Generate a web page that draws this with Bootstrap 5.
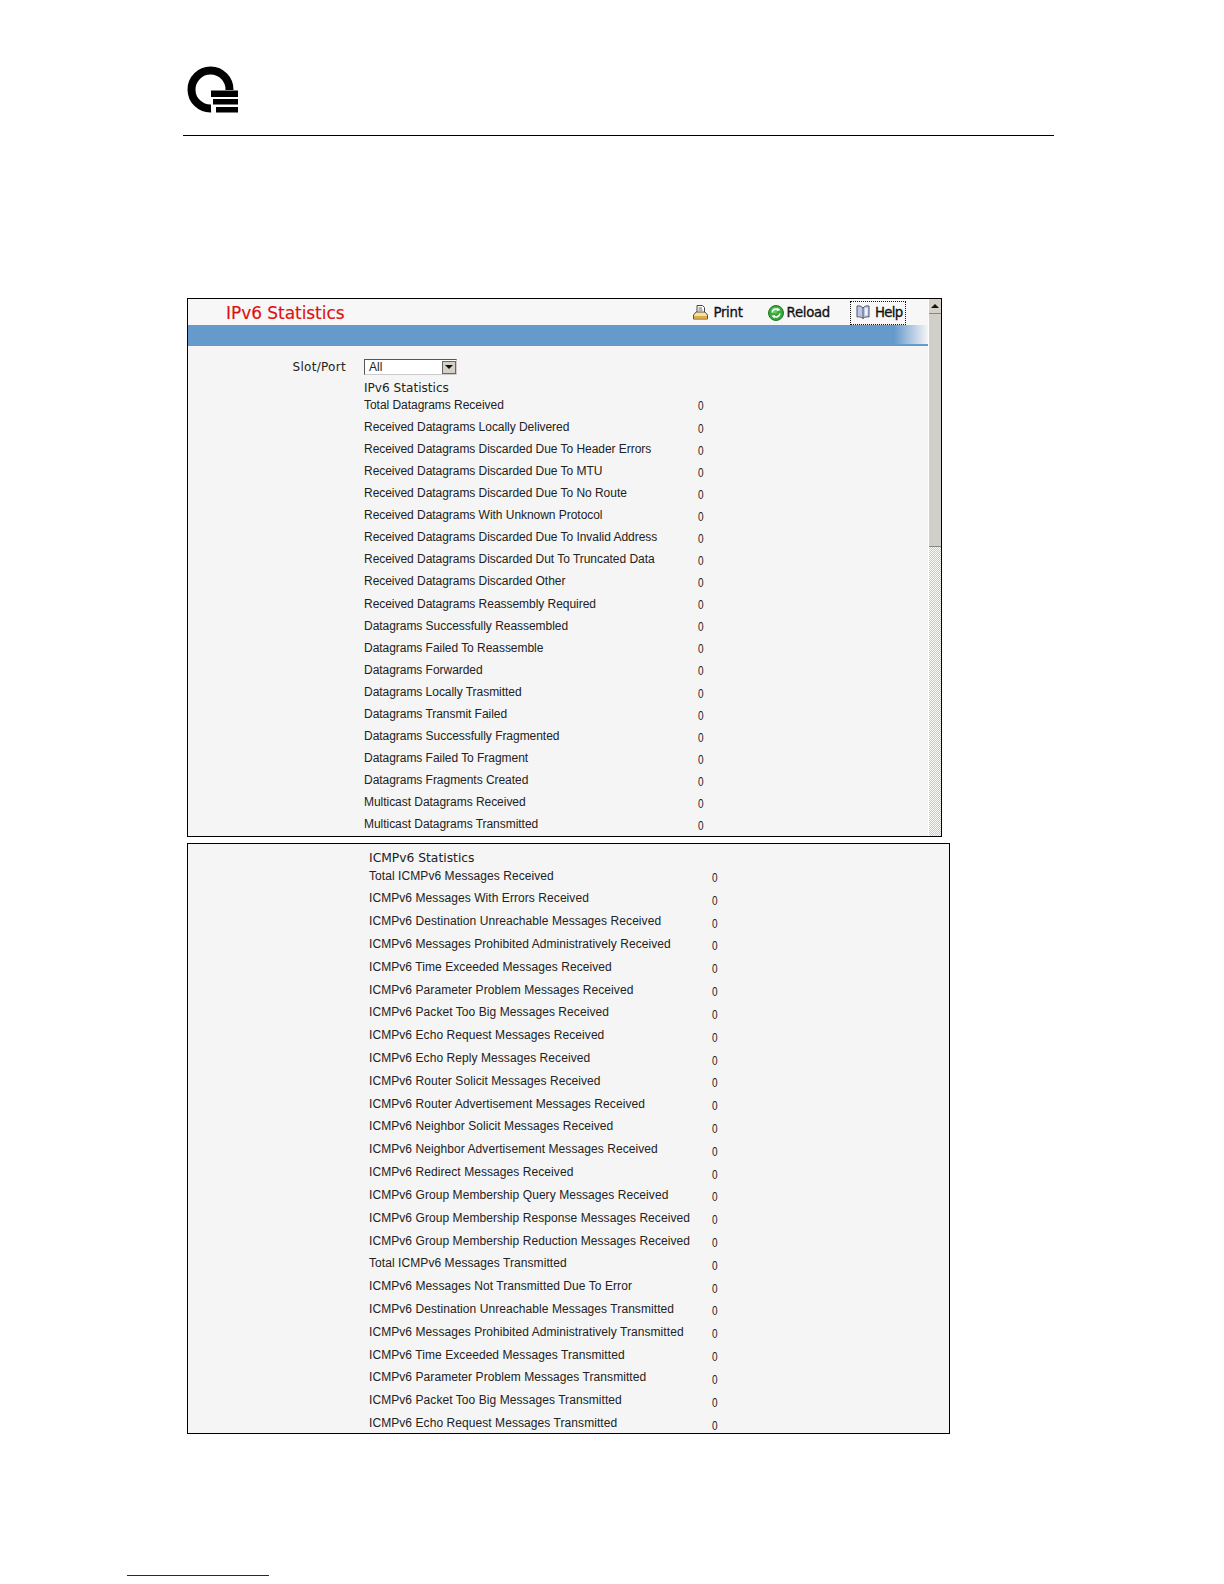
<!DOCTYPE html>
<html lang="en">
<head>
<meta charset="utf-8">
<title>IPv6 Statistics</title>
<link href="https://cdn.jsdelivr.net/npm/bootstrap@5.3.0/dist/css/bootstrap.min.css" rel="stylesheet">
<style>
html,body{background:#fff;margin:0}
body{height:1584px;overflow:hidden;font-family:"Liberation Sans",Arial,sans-serif;color:#222;position:relative}
.logo-wrap{padding:65px 0 0 185px;height:135px}
.logo-wrap svg{display:block}
.top-rule{margin-left:183px;width:871px;height:1px;background:#000}
.panel-a,.panel-b{margin-left:187px;border:1px solid #000;background:#f5f5f5;overflow:hidden}
.panel-a{margin-top:162px;width:755px;height:539px}
.panel-b{margin-top:6px;width:763px;height:591px}
.main-a{width:740px;height:537px}
.title-bar{height:26px;padding:1px 0 0 38px;background:#f7f7f7}
.page-title{font-family:"DejaVu Sans",sans-serif;font-size:17px;color:#e01010;line-height:26px;letter-spacing:-.05px;-webkit-text-stroke:.15px #e01010}
.tool{font-family:"DejaVu Sans",sans-serif;font-size:13.3px;color:#111;line-height:18px;letter-spacing:-.3px;gap:5px;-webkit-text-stroke:.3px #111}
.tools{padding-right:23px;gap:26px}
.tool-reload{gap:3px;margin-left:-1px}
.tool-help{outline:1px dotted #111;height:22px;width:54px;padding-left:4px;margin-left:-5px;gap:4px;letter-spacing:-.7px}
.band{height:21px;background:linear-gradient(90deg,#6699cc 0,#6699cc 95.4%,#f5f5f5 100%);border-bottom:2px solid #6699cc;border-image:linear-gradient(90deg,#6699cc,#6699cc) 1}
.slot-row{height:34px;padding-top:13px}
.slot-label{width:158px;text-align:right;font-family:"DejaVu Sans",sans-serif;font-size:12px;letter-spacing:.3px;line-height:16px;color:#222}
.slot-select{margin-left:18px;width:93px;height:16px;border:1px solid #555;border-right-color:#ccc;border-bottom-color:#ccc;background:#fff;font-size:12px;line-height:14px;padding-left:4px}
.slot-arrow{width:14px;height:13px;margin:0 0 0 auto;background:#d4d0c8;border:1px solid #666;display:flex;align-items:center;justify-content:center}
.slot-arrow::before{content:"";border:4px solid transparent;border-top:4px solid #111;border-bottom:0}
.sec-a,.sec-b{font-family:"DejaVu Sans",sans-serif;line-height:16px;color:#222}
.sec-a{margin-left:176px;font-size:12.1px}
.sec-b{margin:6px 0 0 181px;font-size:12.3px}
.rows-a{padding:.8px 0 0 176px}
.rows-b{padding:1.5px 0 0 181px}
.rows-a .stat{height:22.08px;letter-spacing:-.04px}
.rows-b .stat{height:22.82px;letter-spacing:.07px}
.stat{font-size:12px;line-height:17px;color:#222}
.rows-a .stat-name{width:334px}
.rows-b .stat-name{width:343px}
.rows-a .stat-val{padding-top:1.7px}
.stat-val{font-size:12.5px;padding-top:2.5px;transform:scaleX(.8);transform-origin:left top}
.sbar{width:13px;height:537px;background-color:#f4f4f0;background-image:repeating-conic-gradient(#c9c9c2 0 25%,#fafaf7 0 50%);background-size:2px 2px;border-left:1px solid #fff}
.sbar-up{height:15px;background:#d4d0c8;border-bottom:1px solid #888;display:flex;align-items:center;justify-content:center}
.sbar-up::before{content:"";border:4px solid transparent;border-bottom:4px solid #111;border-top:0}
.sbar-thumb{height:233px;background:#d0cfc8;border-bottom:1px solid #888}
.foot-rule{position:absolute;left:127px;top:1575px;width:142px;height:1px;background:#1a1a9c}
</style>
</head>
<body>
<div class="logo-wrap">
<svg width="56" height="50" viewBox="0 0 56 50" aria-label="logo"><path d="M44.500 25 A19 19 0 1 0 26 43.500" fill="none" stroke="#000" stroke-width="8"/><rect x="26" y="25.500" width="27" height="6.500" fill="#000"/><rect x="28" y="34" width="25" height="5.500" fill="#000"/><rect x="31" y="42" width="22" height="5.500" fill="#000"/></svg>
</div>
<div class="top-rule"></div>

<div class="panel-a d-flex">
 <div class="main-a">
  <div class="title-bar d-flex justify-content-between align-items-center">
   <div class="page-title">IPv6 Statistics</div>
   <div class="tools d-flex align-items-center">
    <div class="tool d-flex align-items-center"><svg width="15" height="15" viewBox="0 0 15 15"><path d="M4 .5h5.500l2 2V8H4z" fill="#fff" stroke="#444"/><path d="M5.500 3h3.500M5.500 5h4" stroke="#666"/><path d="M.5 10l2.500-3h9l2.500 3v4H.5z" fill="#f4e3a8" stroke="#554"/><path d="M1 11h13v2.500H1z" fill="#e8aa32"/></svg>Print</div>
    <div class="tool tool-reload d-flex align-items-center"><svg width="16" height="16" viewBox="0 0 16 16"><circle cx="8" cy="8" r="7.500" fill="#38a838" stroke="#1c7a22"/><circle cx="6.500" cy="5.500" r="3" fill="#8fdc80" opacity=".6"/><path d="M4 7.500a4 4 0 0 1 6.500-2.500M12 8.500a4 4 0 0 1-6.500 2.500" fill="none" stroke="#fff" stroke-width="1.600"/><path d="M9.500 2.500l3 2.800-3.700.8zM6.500 13.500l-3-2.800 3.700-.8z" fill="#fff"/></svg>Reload</div>
    <div class="tool tool-help d-flex align-items-center"><svg width="16" height="15" viewBox="0 0 16 15"><path d="M8 3C6.500 1 4 .5 2 1V12c2-.5 4.500 0 6 1.500 1.500-1.500 4-2 6-1.500V1C12 .5 9.500 1 8 3z" fill="#b9c8e6" stroke="#556"/><path d="M8 3v10.500" stroke="#556"/><path d="M10 3h2.500v7.500H10z" fill="#eef2fa"/></svg>Help</div>
   </div>
  </div>
  <div class="band"></div>
  <div class="slot-row d-flex">
   <div class="slot-label">Slot/Port</div>
   <div class="slot-select d-flex align-items-center">All<span class="slot-arrow"></span></div>
  </div>
  <div class="sec-a">IPv6 Statistics</div>
  <div class="rows-a">
   <div class="stat d-flex"><div class="stat-name">Total Datagrams Received</div><div class="stat-val">0</div></div>
   <div class="stat d-flex"><div class="stat-name">Received Datagrams Locally Delivered</div><div class="stat-val">0</div></div>
   <div class="stat d-flex"><div class="stat-name">Received Datagrams Discarded Due To Header Errors</div><div class="stat-val">0</div></div>
   <div class="stat d-flex"><div class="stat-name">Received Datagrams Discarded Due To MTU</div><div class="stat-val">0</div></div>
   <div class="stat d-flex"><div class="stat-name">Received Datagrams Discarded Due To No Route</div><div class="stat-val">0</div></div>
   <div class="stat d-flex"><div class="stat-name">Received Datagrams With Unknown Protocol</div><div class="stat-val">0</div></div>
   <div class="stat d-flex"><div class="stat-name">Received Datagrams Discarded Due To Invalid Address</div><div class="stat-val">0</div></div>
   <div class="stat d-flex"><div class="stat-name">Received Datagrams Discarded Dut To Truncated Data</div><div class="stat-val">0</div></div>
   <div class="stat d-flex"><div class="stat-name">Received Datagrams Discarded Other</div><div class="stat-val">0</div></div>
   <div class="stat d-flex"><div class="stat-name">Received Datagrams Reassembly Required</div><div class="stat-val">0</div></div>
   <div class="stat d-flex"><div class="stat-name">Datagrams Successfully Reassembled</div><div class="stat-val">0</div></div>
   <div class="stat d-flex"><div class="stat-name">Datagrams Failed To Reassemble</div><div class="stat-val">0</div></div>
   <div class="stat d-flex"><div class="stat-name">Datagrams Forwarded</div><div class="stat-val">0</div></div>
   <div class="stat d-flex"><div class="stat-name">Datagrams Locally Trasmitted</div><div class="stat-val">0</div></div>
   <div class="stat d-flex"><div class="stat-name">Datagrams Transmit Failed</div><div class="stat-val">0</div></div>
   <div class="stat d-flex"><div class="stat-name">Datagrams Successfully Fragmented</div><div class="stat-val">0</div></div>
   <div class="stat d-flex"><div class="stat-name">Datagrams Failed To Fragment</div><div class="stat-val">0</div></div>
   <div class="stat d-flex"><div class="stat-name">Datagrams Fragments Created</div><div class="stat-val">0</div></div>
   <div class="stat d-flex"><div class="stat-name">Multicast Datagrams Received</div><div class="stat-val">0</div></div>
   <div class="stat d-flex"><div class="stat-name">Multicast Datagrams Transmitted</div><div class="stat-val">0</div></div>
  </div>
 </div>
 <div class="sbar"><div class="sbar-up"></div><div class="sbar-thumb"></div></div>
</div>

<div class="panel-b">
 <div class="sec-b">ICMPv6 Statistics</div>
 <div class="rows-b">
  <div class="stat d-flex"><div class="stat-name">Total ICMPv6 Messages Received</div><div class="stat-val">0</div></div>
  <div class="stat d-flex"><div class="stat-name">ICMPv6 Messages With Errors Received</div><div class="stat-val">0</div></div>
  <div class="stat d-flex"><div class="stat-name">ICMPv6 Destination Unreachable Messages Received</div><div class="stat-val">0</div></div>
  <div class="stat d-flex"><div class="stat-name">ICMPv6 Messages Prohibited Administratively Received</div><div class="stat-val">0</div></div>
  <div class="stat d-flex"><div class="stat-name">ICMPv6 Time Exceeded Messages Received</div><div class="stat-val">0</div></div>
  <div class="stat d-flex"><div class="stat-name">ICMPv6 Parameter Problem Messages Received</div><div class="stat-val">0</div></div>
  <div class="stat d-flex"><div class="stat-name">ICMPv6 Packet Too Big Messages Received</div><div class="stat-val">0</div></div>
  <div class="stat d-flex"><div class="stat-name">ICMPv6 Echo Request Messages Received</div><div class="stat-val">0</div></div>
  <div class="stat d-flex"><div class="stat-name">ICMPv6 Echo Reply Messages Received</div><div class="stat-val">0</div></div>
  <div class="stat d-flex"><div class="stat-name">ICMPv6 Router Solicit Messages Received</div><div class="stat-val">0</div></div>
  <div class="stat d-flex"><div class="stat-name">ICMPv6 Router Advertisement Messages Received</div><div class="stat-val">0</div></div>
  <div class="stat d-flex"><div class="stat-name">ICMPv6 Neighbor Solicit Messages Received</div><div class="stat-val">0</div></div>
  <div class="stat d-flex"><div class="stat-name">ICMPv6 Neighbor Advertisement Messages Received</div><div class="stat-val">0</div></div>
  <div class="stat d-flex"><div class="stat-name">ICMPv6 Redirect Messages Received</div><div class="stat-val">0</div></div>
  <div class="stat d-flex"><div class="stat-name">ICMPv6 Group Membership Query Messages Received</div><div class="stat-val">0</div></div>
  <div class="stat d-flex"><div class="stat-name">ICMPv6 Group Membership Response Messages Received</div><div class="stat-val">0</div></div>
  <div class="stat d-flex"><div class="stat-name">ICMPv6 Group Membership Reduction Messages Received</div><div class="stat-val">0</div></div>
  <div class="stat d-flex"><div class="stat-name">Total ICMPv6 Messages Transmitted</div><div class="stat-val">0</div></div>
  <div class="stat d-flex"><div class="stat-name">ICMPv6 Messages Not Transmitted Due To Error</div><div class="stat-val">0</div></div>
  <div class="stat d-flex"><div class="stat-name">ICMPv6 Destination Unreachable Messages Transmitted</div><div class="stat-val">0</div></div>
  <div class="stat d-flex"><div class="stat-name">ICMPv6 Messages Prohibited Administratively Transmitted</div><div class="stat-val">0</div></div>
  <div class="stat d-flex"><div class="stat-name">ICMPv6 Time Exceeded Messages Transmitted</div><div class="stat-val">0</div></div>
  <div class="stat d-flex"><div class="stat-name">ICMPv6 Parameter Problem Messages Transmitted</div><div class="stat-val">0</div></div>
  <div class="stat d-flex"><div class="stat-name">ICMPv6 Packet Too Big Messages Transmitted</div><div class="stat-val">0</div></div>
  <div class="stat d-flex"><div class="stat-name">ICMPv6 Echo Request Messages Transmitted</div><div class="stat-val">0</div></div>
 </div>
</div>
<div class="foot-rule"></div>
<script src="https://cdn.jsdelivr.net/npm/bootstrap@5.3.0/dist/js/bootstrap.bundle.min.js"></script>
</body>
</html>
